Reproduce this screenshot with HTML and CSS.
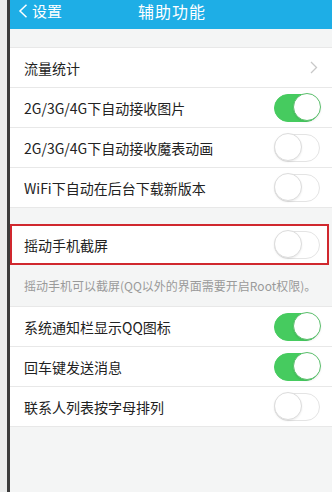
FILE: index.html
```html
<!DOCTYPE html>
<html lang="zh-CN">
<head>
<meta charset="utf-8">
<title>辅助功能</title>
<link rel="stylesheet" href="styles.css">
</head>
<body>
<div class="screen">
  <div class="edge"></div>
  <div class="bar"></div>
  <div class="app">
    <header class="header">
      <div class="back">
        <svg class="chev" width="10" height="14" viewBox="0 0 10 14"><path d="M8.5 0.8 L2 7 L8.5 13.2" fill="none" stroke="#fff" stroke-width="1.5"/></svg>
        <span>设置</span>
      </div>
      <div class="title">辅助功能</div>
    </header>
    <div class="gap-top"></div>
    <div class="group">
      <div class="row"><span class="label">流量统计</span>
        <svg class="arrow" width="8" height="13" viewBox="0 0 8 13"><path d="M1 1 L6.5 6.5 L1 12" fill="none" stroke="#c8c8c8" stroke-width="1.3"/></svg>
      </div>
      <div class="row"><span class="label">2G/3G/4G下自动接收图片</span><span class="toggle on"><span class="knob"></span></span></div>
      <div class="row"><span class="label">2G/3G/4G下自动接收魔表动画</span><span class="toggle"><span class="knob"></span></span></div>
      <div class="row"><span class="label">WiFi下自动在后台下载新版本</span><span class="toggle"><span class="knob"></span></span></div>
    </div>
    <div class="gap"></div>
    <div class="highlight">
      <div class="row plain"><span class="label">摇动手机截屏</span><span class="toggle"><span class="knob"></span></span></div>
    </div>
    <div class="note">摇动手机可以截屏(QQ以外的界面需要开启Root权限)。</div>
    <div class="group">
      <div class="row"><span class="label">系统通知栏显示QQ图标</span><span class="toggle on"><span class="knob"></span></span></div>
      <div class="row"><span class="label">回车键发送消息</span><span class="toggle on"><span class="knob"></span></span></div>
      <div class="row"><span class="label">联系人列表按字母排列</span><span class="toggle"><span class="knob"></span></span></div>
    </div>
  </div>
</div>
</body>
</html>
```

FILE: styles.css
```css
html, body {
  margin: 0;
  padding: 0;
  background: #f4f5f5;
}
body {
  font-family: "Noto Sans CJK SC", "Noto Sans", sans-serif;
  color: #222;
}
.screen {
  display: flex;
  width: 332px;
  height: 492px;
  overflow: hidden;
}
.edge {
  width: 7px;
  background: #eceded;
  flex: none;
}
.bar {
  width: 3px;
  background: #3c3c3c;
  flex: none;
}
.app {
  flex: 1;
  background: #f4f5f5;
  display: flex;
  flex-direction: column;
}
.header {
  height: 29px;
  background: #1eaee6;
  color: #fff;
  display: flex;
  align-items: flex-start;
  position: relative;
}
.back {
  display: flex;
  align-items: center;
  gap: 4px;
  margin-left: 8px;
  margin-top: 3px;
  font-size: 15px;
  line-height: 16px;
}
.title {
  position: absolute;
  left: 128px;
  top: 0;
  font-size: 16px;
  line-height: 23px;
  letter-spacing: 1px;
}
.gap-top {
  height: 18px;
}
.gap {
  height: 16px;
}
.group {
  background: #fff;
  border-top: 1px solid #e8e8e8;
}
.row {
  height: 39px;
  border-bottom: 1px solid #e8e8e8;
  display: flex;
  align-items: center;
  justify-content: space-between;
  padding: 0 12px 0 14px;
  background: #fff;
}
.row.plain {
  border-bottom: none;
  height: 37px;
}
.label {
  font-size: 14px;
  line-height: 20px;
}
.arrow {
  margin-right: 2px;
}
.highlight {
  border: 2px solid #d0282e;
  margin-right: 3px;
  background: #fff;
}
.highlight .row {
  padding-left: 12px;
  padding-right: 7px;
}
.note {
  height: 41px;
  display: flex;
  align-items: center;
  padding-left: 14px;
  font-size: 12px;
  color: #9a9a9a;
  white-space: nowrap;
}
.toggle {
  width: 46px;
  height: 28px;
  border-radius: 14px;
  box-sizing: border-box;
  border: 1.5px solid #e4e4e4;
  background: #fff;
  position: relative;
  display: block;
  flex: none;
}
.toggle .knob {
  position: absolute;
  top: -1.5px;
  left: -1.5px;
  width: 28px;
  height: 28px;
  box-sizing: border-box;
  border-radius: 50%;
  background: #fff;
  border: 1.5px solid #dcdcdc;
  box-shadow: 0 1px 2px rgba(0,0,0,0.08);
}
.toggle.on {
  background: #46cb5f;
  border-color: #46cb5f;
}
.toggle.on .knob {
  left: auto;
  right: -1.5px;
  border: 1.5px solid #5bbf6c;
}
```
